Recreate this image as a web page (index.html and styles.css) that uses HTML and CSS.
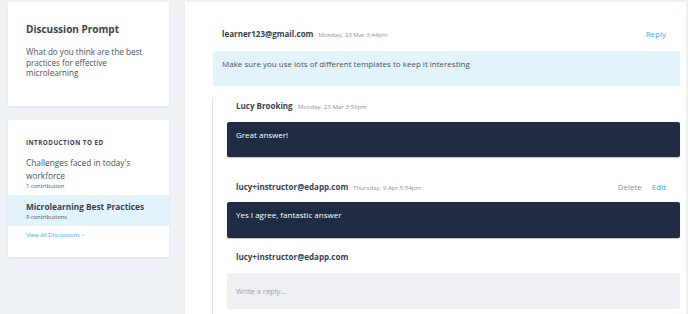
FILE: index.html
```html
<!DOCTYPE html>
<html>
<head>
<meta charset="utf-8">
<link rel="stylesheet" href="styles.css">
</head>
<body>
<div class="page">
  <aside class="sidebar">
    <section class="card prompt">
      <h1 class="prompt-title">Discussion Prompt</h1>
      <p class="prompt-text">What do you think are the best practices for effective microlearning</p>
    </section>
    <section class="card list">
      <h2 class="list-title">INTRODUCTION TO ED</h2>
      <div class="item">
        <div class="item-name">Challenges faced in today's workforce</div>
        <div class="item-count">1 contribution</div>
      </div>
      <div class="item active">
        <div class="item-name">Microlearning Best Practices</div>
        <div class="item-count">9 contributions</div>
      </div>
      <a class="view-all">View All Discussions &gt;</a>
    </section>
  </aside>
  <main class="main">
    <div class="post">
      <div class="head">
        <span class="author">learner123@gmail.com</span>
        <span class="date">Monday, 23 Mar 3:44pm</span>
        <span class="actions"><span class="link">Reply</span></span>
      </div>
      <div class="bubble light">Make sure you use lots of different templates to keep it interesting</div>
    </div>
    <div class="thread">
      <div class="reply r1">
        <div class="head">
          <span class="author">Lucy Brooking</span>
          <span class="date">Monday, 23 Mar 3:59pm</span>
        </div>
        <div class="bubble dark">Great answer!</div>
      </div>
      <div class="reply r2">
        <div class="head">
          <span class="author">lucy+instructor@edapp.com</span>
          <span class="date">Thursday, 9 Apr 5:54pm</span>
          <span class="actions"><span class="muted">Delete</span><span class="link">Edit</span></span>
        </div>
        <div class="bubble dark">Yes I agree, fantastic answer</div>
      </div>
      <div class="reply r3">
        <div class="head">
          <span class="author">lucy+instructor@edapp.com</span>
        </div>
        <div class="input">Write a reply...</div>
      </div>
    </div>
  </main>
</div>
</body>
</html>
```

FILE: styles.css
```css
* { box-sizing: border-box; }
html, body { margin: 0; padding: 0; }
body {
  background: #eef1f5;
  font-family: "Open Sans", "DejaVu Sans", sans-serif;
  color: #3a4250;
  width: 688px;
  height: 314px;
  overflow: hidden;
}
.page {
  display: flex;
  padding-top: 2px;
  height: 314px;
}
.sidebar {
  width: 185px;
  flex: none;
  padding: 0 16px 0 8px;
}
.card {
  background: #fff;
  border-radius: 2px;
  box-shadow: 0 1px 2px rgba(40, 50, 70, 0.08);
}
.prompt {
  height: 104px;
  padding: 21px 18px 0 18px;
}
.prompt-title {
  margin: 0;
  font-size: 10px;
  font-weight: 700;
  line-height: 12px;
  color: #3a4250;
}
.prompt-text {
  margin: 12px 0 0;
  font-size: 8.1px;
  line-height: 10.5px;
  color: #4a5260;
}
.list {
  margin-top: 14px;
  height: 137px;
  padding: 18px 0 0;
}
.list-title {
  margin: 0 18px 5px;
  font-size: 6.3px;
  font-weight: 700;
  letter-spacing: 0.45px;
  line-height: 9px;
  color: #3a4250;
}
.item {
  padding: 4px 18px 5px;
}
.item-name {
  font-size: 8.3px;
  line-height: 13px;
  color: #4a5260;
}
.item-count {
  font-size: 5.8px;
  line-height: 8px;
  color: #4a5260;
}
.item.active {
  background: #e3f3fb;
  padding: 5px 18px 5px;
  height: 31px;
}
.item.active .item-name {
  font-weight: 700;
  color: #3a4250;
}
.view-all {
  display: block;
  margin: 5px 18px 0;
  font-size: 5.8px;
  line-height: 8px;
  color: #3aa7ec;
}
.main {
  flex: 1;
  background: #fff;
  margin-right: 2px;
  padding: 25px 6px 0 28px;
  box-shadow: 0 1px 2px rgba(40, 50, 70, 0.06);
}
.head {
  display: flex;
  align-items: baseline;
  height: 14px;
  line-height: 14px;
  padding: 0 14px 0 9px;
}
.author {
  font-size: 8px;
  font-weight: 700;
  color: #3a4250;
}
.date {
  margin-left: 5px;
  font-size: 6.1px;
  color: #8a919c;
}
.actions {
  margin-left: auto;
  display: flex;
  gap: 10px;
  font-size: 8px;
}
.link { color: #3aa7ec; }
.muted { color: #8a919c; }
.bubble {
  margin-top: 10px;
  height: 35px;
  padding: 6px 9px;
  font-size: 8px;
  line-height: 13px;
  border-radius: 2px;
}
.bubble.light {
  background: #e3f3fb;
  color: #4a5260;
}
.bubble.dark {
  background: #1f2c43;
  color: #fff;
  margin-top: 9px;
  box-shadow: 0 1px 1px rgba(0, 0, 0, 0.25);
}
.thread {
  margin-top: 12px;
  margin-left: -1px;
  border-left: 1px solid #e3e6eb;
  padding: 1px 0 0 14px;
  height: 220px;
}
.r2 { margin-top: 23px; }
.r2 .bubble { height: 36px; margin-top: 8px; }
.r3 { margin-top: 12px; }
.input {
  margin-top: 9px;
  height: 36px;
  background: #eef0f4;
  border-radius: 2px;
  padding: 13px 9px 0;
  font-size: 7.5px;
  line-height: 10px;
  color: #9aa0a9;
}
```
